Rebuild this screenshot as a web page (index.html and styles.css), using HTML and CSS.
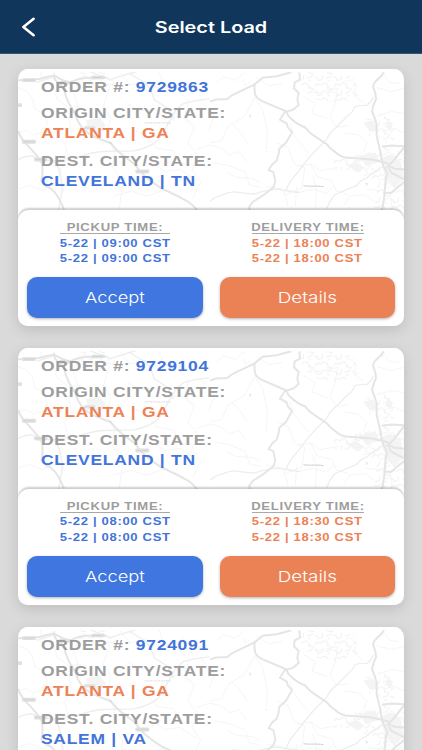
FILE: index.html
```html
<!DOCTYPE html>
<html lang="en">
<head>
  <meta charset="UTF-8" />
  <meta name="viewport" content="width=device-width, initial-scale=1.0" />
  <title>Select Load</title>
  <link rel="stylesheet" href="styles.css">
</head>
<body>
  <!-- road map shared by all the cards -->
  <svg class="defs" width="0" height="0" aria-hidden="true">
    <defs>
      <pattern id="streets" width="57" height="46" patternUnits="userSpaceOnUse">
        <path d="M0 6l9 2 3 8 12-3 2-13M3 36l5-9 14 3 6-6 10 2 6 12M54 0l-8 7-10 2M42 34l-1 6 16 2M40 18l8-2" fill="none" stroke="#f1f1f1" stroke-width="3" />
      </pattern>
      <symbol id="map" viewBox="24 28 1158 424" preserveAspectRatio="none">
        <g fill="url(#streets)">
          <path d="M876 38l110-4 50 22 10 50-50 24-72-8-50-34z" />
          <path d="M1062 178l44-10 12 70-40-10z" />
          <path d="M1106 160l40 20 10 60-34 20z" />
          <path d="M970 300l110-24 34-12 68 0v186h-90l10-80-50-30-82-10z" />
          <path d="M190 40l100-6 40 40-80 30z" />
        </g>
        <g fill="#f4f4f4">
          <path d="M1112 300l26-16 34 20 10 50-30 30-26-30zM1046 290l50-12 12 30-40 10zM228 182l40-8 20 24-22 26-30-8z" />
          <path d="M1010 318l30-10 24 18-20 10zM1132 180l16 14-6 20-14-12zM1060 190l30-8 14 30-24 4z" />
        </g>
        <g class="minor">
          <path d="M24 84l26 10 18 24 6 30 28 14 10 32-18 20M24 220l26-8 20 14 40-12 34 8 22-18M24 390l34-12 40 16 34-24 54 8 30-22" />
          <path d="M90 36l10 30 34 20 6 32 36 26 40-4M210 64l-20 34 14 44-28 30 8 50-20 30 12 46-30 40 16 60" />
          <path d="M300 80l-20 60 22 34-12 60 24 40-6 50 30 46-10 80M330 40l30 36 46-10 44 22 40-14 44 20" />
          <path d="M350 130l40 24 44-6 30 30 50-8 34 30M372 212l36 14 32 40 50 8 20 38 46 6M430 314l36 22 44-6 52 34M310 410l54-14 46 14 60-20 40 20" />
          <path d="M520 60l-14 34 30 30-12 48 30 28-20 50 28 36-16 44 26 38-24 50M560 270l40-14 34 10 24 20 28-10 24 32" />
          <path d="M600 250l34-6 20-44 50-30 30-56 24 36 14 66-2 54M664 190l30 32 18 30M610 310l46 8 50 20 12 38 34 8" />
          <path d="M652 340l28 14 50 4 20 12M620 70l20-18 36 10 26-22M700 60l6 18 14-12M736 52l40 26 40-6" />
          <path d="M840 190l10 34 26 34 20 24M900 80l24 20 60-14-10 52-14 36 20 30 34-6M880 110l36 22-10 28 46 18" />
          <path d="M800 250l34 14 20 50 30 12-8 60-50 20M862 320l44-6 24 20 54-10M900 310l22 42 44 12 12 30 38 12" />
          <path d="M824 390l46 8 40-8 40 12 20-20M770 380l50 10 14 50M860 380l-4 60M908 348l12 40-4 60" />
          <path d="M1000 220l44 6 26 24-10 30M1020 60l20 18-10 28 30 22M1096 60l28-12 14 20 30 4M1100 84l44 12 38-10M1100 170l44-14 38 6M1118 216l34-10 30 14" />
          <path d="M1060 350l30-10 20 22 40-6 32 14M1070 390l38 4 34-14M1140 400l6 44M1000 440l20-30 46-4 26 20M446 36l10 24-12 26M570 120l44 50-18 44" />
        </g>
        <g class="road">
          <path d="M24 300q22-12 44-10q30 14 60 14q40-8 80-12q36-14 74-16l90-2q24-4 44-14 18-8 28-18 14-16 22-34l30-54 24-22 32-8 46-6" />
          <path d="M240 36l60 24 84-26M356 40l50 30q20 20 26 50l40 26 20 36" />
          <path d="M828 392q14-32 36-54l24-32q24-30 52-56 12-10 18-26l56-56q14-8 20-26 16-6 36-4 14-10 20-26" />
          <path d="M600 426q18-16 40-20 20-10 40-8 28 4 54 6 18-8 38-10 18-6 38-4 30 8 60 10M950 448q8-24 24-42l66-28q12-16 30-22 20-18 48-34" />
          <path d="M134 40l-10 14-44 14M130 304q14 14 20 34 8 28 6 56l-10 58" />
        </g>
        <g class="highway">
          <path d="M24 62q34 0 64-4 22-8 44-10 22 14 46 20 24-10 50-14h60" />
          <path d="M130 48q4 12 12 20l20 18q4 24 14 44l20 34q6 22 18 38 18 20 40 30l50 20" />
          <path d="M24 214q6 18 18 32l24 26q18 18 30 40 4 28-2 54 10 14 26 20 16 12 26 30l16 34" />
          <path d="M302 250q14 20 34 36l40 30q12 20 30 36 24 20 50 36l50 24 30 16q16 12 28 28" />
          <path d="M600 126l18-6 34-2q10-10 24-16l58-28 24-20 42-4 44-12" />
          <path d="M734 72q-2 18 2 34 8 14 24 20l70 30q2 12 12 20 18 18 44 28 12 16 28 26l36 24q10 14 26 24 12 12 30 16l80 6 50 12" />
          <path d="M1122 38q-10 14-24 26-10 8-8 20 8 16 8 34-8 16-12 36 8 20 14 40v36l12 50q2 20 8 40 8 10 12 24-6 14-6 30-2 36-8 70l-14 34" />
          <path d="M1116 262l28-4 38 2M1182 264l-30 38-22 22M1132 318l22 10 28 2M1136 326l8 14 38 20M1120 400h24l38-32" />
        </g>
        <path class="river" d="M868 38l2 22-16 8-2 18 14 14-4 20 4 16-16 14-26 8-14 22 20 12 4 12 12 14-18 32-20 18-2 16-6 20-14 12-10 16 14 6 6 28-6 18-28 22-34 22-10 14 2 18" />
        <g fill="#e0e0e0">
          <rect x="36" y="56" width="42" height="11" rx="4" />
          <rect x="244" y="48" width="40" height="11" rx="4" />
          <rect x="146" y="64" width="34" height="11" rx="4" />
          <rect x="16" y="131" width="20" height="11" rx="4" />
          <rect x="36" y="241" width="42" height="12" rx="4" />
          <rect x="72" y="294" width="40" height="12" rx="4" />
          <rect x="376" y="330" width="42" height="12" rx="4" />
          <rect x="222" y="200" width="34" height="10" rx="4" />
        </g>
        <g fill="none" stroke="#d0d0d0" stroke-width="3">
          <path d="M42 61.500h30M250 53.500h28M42 247h30M78 300h28M382 336h30" stroke-dasharray="5 2" />
          <path d="M404 190h78" stroke="#e6e2e2" stroke-width="4" stroke-dasharray="6 2" />
          <path d="M881 379c18 3 40-1 60 3" stroke="#c4c4c4" stroke-dasharray="4 1" />
          <path d="M717 166l5 2-2 6M1067 372l5 1-3 6M768 275l2 3M300 246l4 8" stroke-width="2" />
        </g>
        <path d="M24 28h1158v9H24z" fill="#fff" />
      </symbol>
    </defs>
  </svg>

  <header class="topbar">
    <button class="back" aria-label="Back">
      <svg width="14" height="20" viewBox="0 0 14 20"><path d="M12.600 1.800L2.400 10l10.200 8.200" fill="none" stroke="#fff" stroke-width="2.600" stroke-linecap="round" stroke-linejoin="round" /></svg>
    </button>
    <h1>Select Load</h1>
  </header>

  <main class="loads">
    <article class="card">
      <div class="route">
        <svg class="map"><use href="#map" /></svg>
        <div class="info">
          <p class="order">ORDER #: <b>9729863</b></p>
          <p class="origin">ORIGIN CITY/STATE:<br><span>ATLANTA | GA</span></p>
          <p class="dest">DEST. CITY/STATE:<br><b>CLEVELAND | TN</b></p>
        </div>
      </div>
      <div class="panel">
        <div class="col pickup">
          <h2><span>PICKUP TIME:</span></h2>
          <p>5-22 | 09:00 CST<br>5-22 | 09:00 CST</p>
          <button class="btn accept"><span>Accept</span></button>
        </div>
        <div class="col delivery">
          <h2><span>DELIVERY TIME:</span></h2>
          <p>5-22 | 18:00 CST<br>5-22 | 18:00 CST</p>
          <button class="btn details"><span>Details</span></button>
        </div>
      </div>
    </article>

    <article class="card">
      <div class="route">
        <svg class="map"><use href="#map" /></svg>
        <div class="info">
          <p class="order">ORDER #: <b>9729104</b></p>
          <p class="origin">ORIGIN CITY/STATE:<br><span>ATLANTA | GA</span></p>
          <p class="dest">DEST. CITY/STATE:<br><b>CLEVELAND | TN</b></p>
        </div>
      </div>
      <div class="panel">
        <div class="col pickup">
          <h2><span>PICKUP TIME:</span></h2>
          <p>5-22 | 08:00 CST<br>5-22 | 08:00 CST</p>
          <button class="btn accept"><span>Accept</span></button>
        </div>
        <div class="col delivery">
          <h2><span>DELIVERY TIME:</span></h2>
          <p>5-22 | 18:30 CST<br>5-22 | 18:30 CST</p>
          <button class="btn details"><span>Details</span></button>
        </div>
      </div>
    </article>

    <article class="card">
      <div class="route">
        <svg class="map"><use href="#map" /></svg>
        <div class="info">
          <p class="order">ORDER #: <b>9724091</b></p>
          <p class="origin">ORIGIN CITY/STATE:<br><span>ATLANTA | GA</span></p>
          <p class="dest">DEST. CITY/STATE:<br><b>SALEM | VA</b></p>
        </div>
      </div>
    </article>
  </main>
</body>
</html>
```

FILE: styles.css
```css
* {
  box-sizing: border-box;
}

body {
  margin: 0;
  height: 750px;
  overflow: hidden;
  background: #dadada;
  font-family: "Liberation Sans", Arial, sans-serif;
}

h1, h2, p {
  margin: 0;
}

button {
  border: none;
  padding: 0;
  cursor: pointer;
}

.defs {
  display: block;
  height: 0;
}

.topbar {
  display: grid;
  grid-template-columns: 60px 1fr 60px;
  align-items: center;
  height: 54px;
  background: #10375b;
  border-bottom: 1px solid #405469;
}

.back {
  display: flex;
  margin-left: 21px;
  width: 14px;
  background: none;
}

.topbar h1 {
  color: #fff;
  font-family: Inter, sans-serif;
  font-size: 16px;
  font-weight: 600;
  line-height: 20px;
  text-align: center;
  transform: scaleX(1.24);
}

.loads {
  display: flex;
  flex-direction: column;
  gap: 22px;
  padding: 15.300px 18px 0;
}

.card {
  flex: none;
  height: 256.800px;
  border-radius: 10px;
  background: #fff;
  box-shadow: 0 4px 14px rgba(0, 0, 0, 0.13);
  overflow: hidden;
}

.route {
  display: grid;
  height: 141px;
  overflow: hidden;
}

.map, .info {
  grid-area: 1 / 1;
}

.map {
  width: 386px;
  height: 141px;
}

.map path {
  stroke-linejoin: round;
}

.minor {
  fill: none;
  stroke: #f5f5f5;
  stroke-width: 3;
}

.road {
  fill: none;
  stroke: #eeeeee;
  stroke-width: 4;
}

.highway {
  fill: none;
  stroke: #e5e5e5;
  stroke-width: 6;
}

.river {
  fill: none;
  stroke: #e6e6e6;
  stroke-width: 6;
}

.info {
  padding: 8px 0 0 23px;
  color: #9d9d9d;
  font-size: 15.500px;
  font-weight: bold;
  line-height: 20.300px;
  letter-spacing: 0.650px;
  white-space: nowrap;
}

.info p {
  width: 200px;
  transform: scaleX(1.126);
  transform-origin: left;
}

.info b {
  color: #4274da;
}

.origin {
  margin-top: 5.500px;
}

.origin span {
  color: #ec8255;
}

.dest {
  margin-top: 7.500px;
}

.panel {
  position: relative;
  display: grid;
  grid-template-columns: 175.700px 174.700px;
  gap: 17.600px;
  height: 116px;
  padding: 9.800px 9px 0;
  border-radius: 11px 11px 0 0;
  background: #fff;
  box-shadow: 0 -2px 2px rgba(0, 0, 0, 0.2);
}

.col {
  display: flex;
  flex-direction: column;
  align-items: center;
  font-size: 11.600px;
  font-weight: bold;
  letter-spacing: 0.600px;
  text-align: center;
  white-space: nowrap;
}

.col h2 {
  width: 110px;
  height: 14px;
  border-bottom: 1px solid #a8a8a8;
  color: #9d9d9d;
  font-size: 11.600px;
  line-height: 13px;
}

.delivery h2 {
  width: 112px;
}

.col h2 span {
  display: block;
  transform: scaleX(1.13);
}

.col p {
  padding-top: 0.500px;
  line-height: 15.700px;
  transform: scaleX(1.125);
}

.pickup p {
  color: #4274da;
}

.delivery p {
  color: #ec8255;
}

.btn {
  margin-top: 10.900px;
  width: 100%;
  height: 41px;
  border-radius: 10px;
  color: #fff;
  font-family: Inter, sans-serif;
  font-size: 15px;
  font-weight: 300;
  box-shadow: 0 1px 3px rgba(0, 0, 0, 0.3);
}

.btn span {
  display: block;
  transform: scaleX(1.22);
}

.details span {
  transform: scaleX(1.26);
}

.accept {
  background: #3f76df;
}

.details {
  background: #eb8255;
}
```
